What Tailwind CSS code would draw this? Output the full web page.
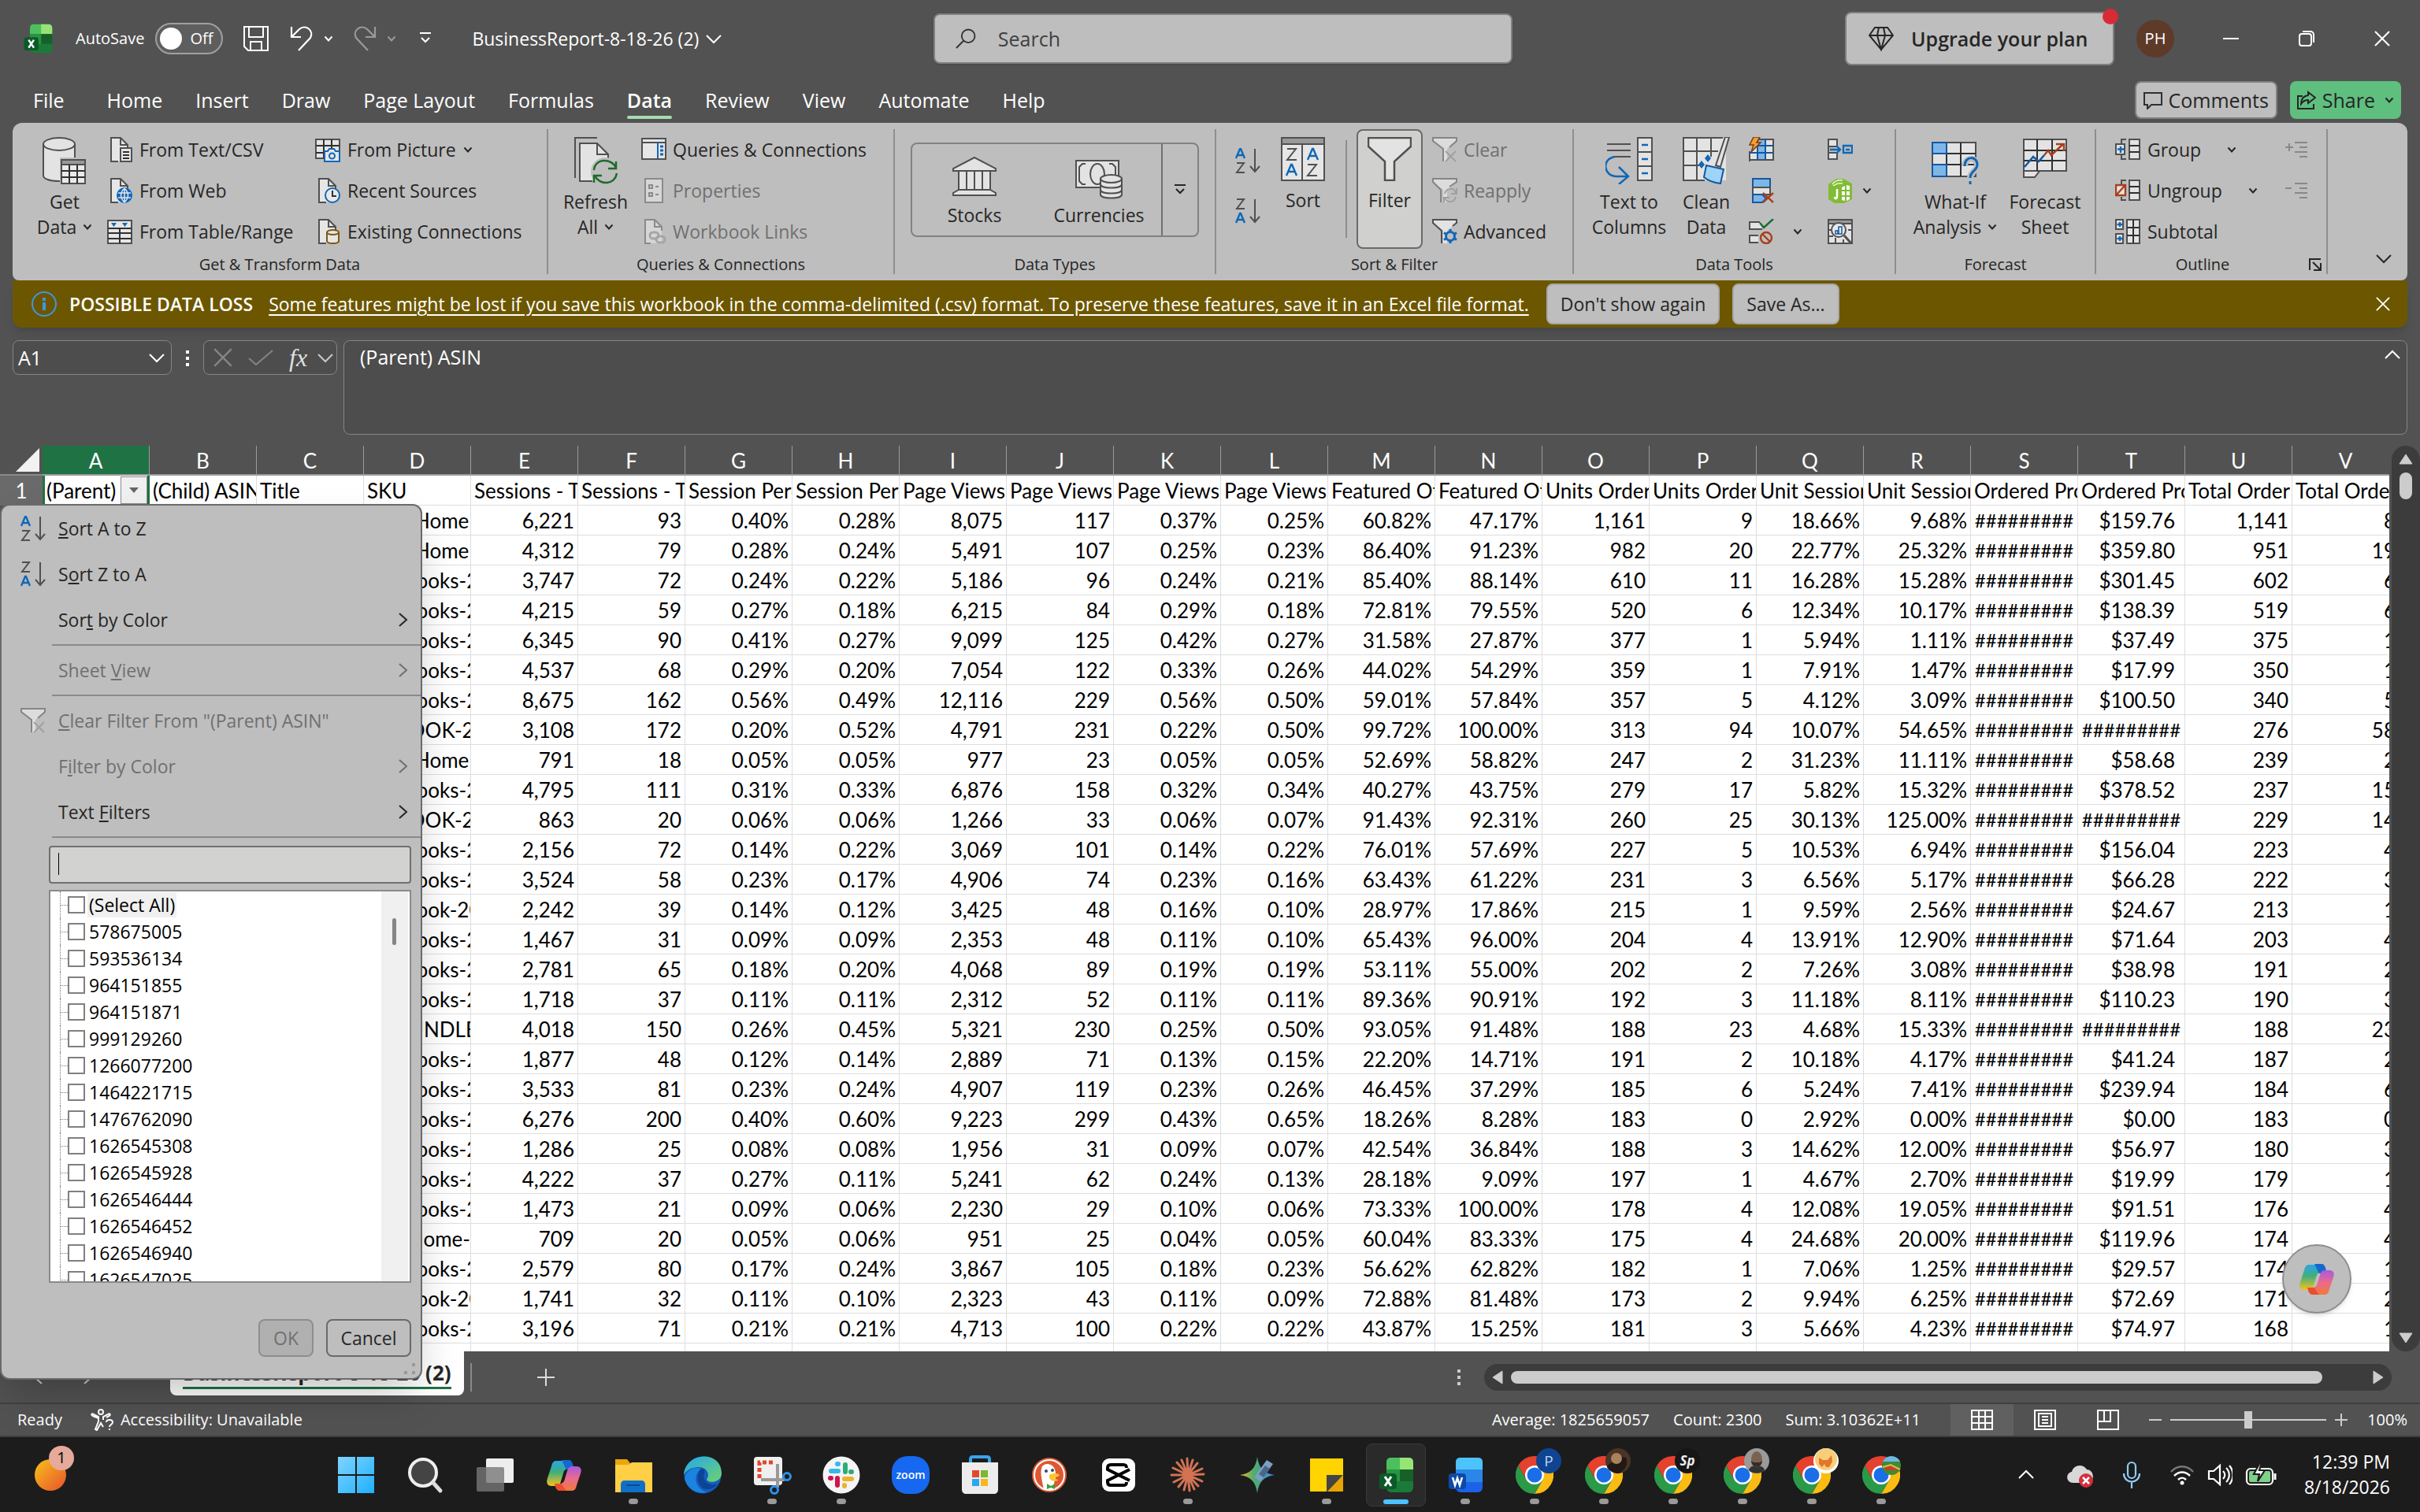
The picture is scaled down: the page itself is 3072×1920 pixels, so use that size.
<!DOCTYPE html>
<html lang="en">
  <head>
    <meta charset="UTF-8" />
    <meta name="viewport" content="width=device-width, initial-scale=1.0" />
    <title>BusinessReport-8-18-26 (2) - Excel</title>
    <script src="https://cdn.jsdelivr.net/npm/@tailwindcss/browser@4"></script>
  </head>
  <body class="flex h-screen flex-col overflow-hidden bg-[#525252] font-['Open_Sans','Noto_Sans',sans-serif] text-[23px] leading-8 text-[#262626]">
    <!-- shared icons -->
    <svg class="absolute size-0" aria-hidden="true">
      <defs>
        <linearGradient id="gBlue" x1="0" y1="0" x2="1" y2="1"><stop offset="0" stop-color="#7fd4ff" /><stop offset="1" stop-color="#1fb0ff" /></linearGradient>
        <linearGradient id="gCopL" x1="0" y1="0" x2="0" y2="1"><stop offset="0" stop-color="#2aa5e8" /><stop offset=".45" stop-color="#3fae7c" /><stop offset="1" stop-color="#f6c21c" /></linearGradient>
        <linearGradient id="gCopR" x1="0" y1="0" x2="0" y2="1"><stop offset="0" stop-color="#a65be0" /><stop offset=".5" stop-color="#ec6a8c" /><stop offset="1" stop-color="#f07a3a" /></linearGradient>
        <linearGradient id="gEdge" x1="0" y1="0" x2="1" y2="1"><stop offset="0" stop-color="#22a7ee" /><stop offset="1" stop-color="#6fd36b" /></linearGradient>
        <linearGradient id="gGem" x1="0" y1="0" x2="1" y2="0"><stop offset="0" stop-color="#f2b32a" /><stop offset=".4" stop-color="#4fae6a" /><stop offset="1" stop-color="#3f86f0" /></linearGradient>
        <linearGradient id="gSun" x1="0" y1="0" x2="1" y2="1"><stop offset="0" stop-color="#f8c21a" /><stop offset="1" stop-color="#e8502c" /></linearGradient>
      </defs>
      <symbol id="chev" viewBox="0 0 12 12"><path d="M1.5 3.5 6 8.5l4.500-5" fill="none" stroke="currentColor" stroke-width="2" /></symbol>
      <symbol id="chevThin" viewBox="0 0 20 20"><path d="m1 6 9 9 9-9" fill="none" stroke="currentColor" stroke-width="2" /></symbol>
      <symbol id="chevRight" viewBox="0 0 20 20"><path d="m5 2 9 8-9 8" fill="none" stroke="currentColor" stroke-width="2" /></symbol>
      <symbol id="close" viewBox="0 0 20 20"><path d="m1 1 18 18M19 1 1 19" fill="none" stroke="currentColor" stroke-width="2" /></symbol>
      <symbol id="page" viewBox="0 0 32 32"><path d="M5 1h12l9 9v21H5z" fill="#e6e6e6" stroke="none" /><path d="M14 31H5V1h12l9 9v4M17 1v9h9" fill="none" stroke="#505050" stroke-width="2" /></symbol>
      <symbol id="sortAZ" viewBox="0 0 32 32">
        <path d="m1 13 5-12h1l5 12M3 9h7" fill="none" stroke="#1067b8" stroke-width="2.400" />
        <path d="M2 19h9L2 31h10M25 1v29m-6-7 6 7 6-7" fill="none" stroke="#505050" stroke-width="2" />
      </symbol>
      <symbol id="sortZA" viewBox="0 0 32 32">
        <path d="M2 1h9L2 13h10M25 1v29m-6-7 6 7 6-7" fill="none" stroke="#505050" stroke-width="2" />
        <path d="m1 31 5-12h1l5 12M3 27h7" fill="none" stroke="#1067b8" stroke-width="2.400" />
      </symbol>
      <symbol id="copilot" viewBox="0 0 48 48">
        <path d="M14 6h14c4 0 6 2 7 6l1 4h-6c-4 0-6 2-7 6l-3 10c-1 4-3 6-7 6H8c-5 0-7-4-5-10l5-15c1-5 3-7 6-7z" fill="url(#gCopL)" />
        <path d="M21 5h9c3 0 4 2 5 5l2 7h-7c-3 0-4 0-6-6z" fill="#1468cf" />
        <path d="M34 44H20c-4 0-6-2-7-6l-1-3h6c4 0 6-2 7-6l3-10c1-4 3-6 7-6h5c5 0 7 4 5 9l-5 15c-1 5-3 7-6 7z" fill="url(#gCopR)" />
        <path d="M27 44h-8c-3 0-5-2-6-6l-1-3h6c3 0 4 1 5 4z" fill="#ea4d2f" />
      </symbol>
      <symbol id="chrome" viewBox="0 0 48 48">
        <path d="M24 12h20.800A24 24 0 0 1 24 48l10.400-18z" fill="#fabb12" />
        <path d="M34.400 30 24 48A24 24 0 0 1 3.200 12l10.400 18z" fill="#2a9a48" />
        <path d="M13.600 30 3.200 12A24 24 0 0 1 44.800 12H24z" fill="#e5412f" />
        <circle cx="24" cy="24" r="12" fill="#fff" /><circle cx="24" cy="24" r="9.500" fill="#1a6fe8" />
      </symbol>
      <symbol id="excel" viewBox="0 0 48 48">
        <rect x="12" y="2" width="34" height="44" rx="6" fill="#1c7a38" />
        <path d="M18 2h12v15H12V8c0-4 2-6 6-6z" fill="#4cc05e" /><path d="M29 2h11c4 0 6 2 6 6v9H29z" fill="#97e476" />
        <path d="M29 17h17v15H29z" fill="#17602a" /><path d="M12 17h17v15H12z" fill="#27963f" />
        <rect x="3" y="22" width="22" height="20" rx="4" fill="#0c5a2a" />
        <path d="m10 26 8 12m0-12-8 12" stroke="#fff" stroke-width="3" />
      </symbol>
      <symbol id="word" viewBox="0 0 48 48">
        <rect x="12" y="2" width="34" height="44" rx="6" fill="#1a62e8" />
        <path d="M18 2h22c4 0 6 2 6 6v10H12V8c0-4 2-6 6-6z" fill="#4cc4fb" /><path d="M12 17h34v16H12z" fill="#2c86e8" />
        <rect x="3" y="22" width="22" height="20" rx="4" fill="#0c4aa8" />
        <path d="m8 27 3 10 3-9 3 9 3-10" fill="none" stroke="#fff" stroke-width="2.500" />
      </symbol>
    </svg>

    <!-- title bar -->
    <header class="flex h-[98px] shrink-0 items-center pr-[38px] pl-7 text-white">
      <svg class="size-10" viewBox="0 0 48 48"><use href="#excel" /></svg>
      <label for="autosave" class="ml-7 text-xl">AutoSave</label>
      <div class="relative ml-[14px] flex h-10 w-[86px] items-center">
        <input id="autosave" type="checkbox" role="switch" class="peer size-full appearance-none rounded-full border-2 border-[#a0a0a0] bg-[#5e5e5e]" />
        <span class="pointer-events-none absolute left-[6px] size-7 rounded-full bg-white"></span>
        <span class="pointer-events-none absolute left-[44px] text-xl">Off</span>
      </div>
      <button aria-label="Save" class="ml-[26px]"><svg class="size-8" viewBox="0 0 32 32" fill="none" stroke="#fff" stroke-width="2"><path d="M1 1h30v30H6l-5-5zM7 1v13h18V1M9 31V20h14v11" /></svg></button>
      <button aria-label="Undo" class="ml-[26px]"><svg class="size-8" viewBox="0 0 32 32" fill="none" stroke="#fff" stroke-width="2.200"><path d="M3 1v13h12M3 14 13 4c8-7 19 2 14 11L12 31" /></svg></button>
      <svg class="ml-3 size-3"><use href="#chev" /></svg>
      <button aria-label="Redo" class="ml-6 text-[#9a9a9a]"><svg class="size-8" viewBox="0 0 32 32" fill="none" stroke="currentColor" stroke-width="2.200"><path d="M29 1v13H17M29 14 19 4C11-3 0 6 5 15l15 16" /></svg></button>
      <svg class="ml-3 size-3 text-[#9a9a9a]"><use href="#chev" /></svg>
      <button aria-label="Customize Quick Access Toolbar" class="ml-[30px]"><svg class="h-4 w-[14px]" viewBox="0 0 14 16" fill="none" stroke="#fff" stroke-width="2"><path d="M0 1h14M2 7l5 5 5-5" /></svg></button>
      <button class="ml-[52px] flex items-center gap-[9px]">BusinessReport-8-18-26 (2)<svg class="size-5"><use href="#chevThin" /></svg></button>
      <div class="absolute left-[1185px] flex h-16 w-[735px] items-center gap-7 rounded-lg border-2 border-[#808080] bg-[#bebebe] pl-[26px] text-[#3c3c3c] shadow">
        <svg class="size-7" viewBox="0 0 28 28" fill="none" stroke="#303030" stroke-width="2"><circle cx="17.500" cy="10.500" r="9" /><path d="M11 17 1 27" /></svg>
        <input aria-label="Search" placeholder="Search" class="w-full bg-transparent text-[25px] outline-none placeholder:text-[#404040]" />
      </div>
      <button class="relative ml-auto flex h-[68px] w-[342px] items-center gap-[22px] rounded-lg border-2 border-[#808080] bg-[#bebebe] pl-7 text-[25px] font-semibold text-[#262626]">
        <svg class="size-8" viewBox="0 0 32 32" fill="none" stroke="#262626" stroke-width="2"><path d="M8 2h16l7 10-15 18L1 12zM1 12h30M11 12l5 18 5-18-2-10M11 12l2-10" /></svg>
        Upgrade your plan
        <span class="absolute -top-[6px] -right-[7px] size-5 rounded-full bg-[#d92b35]"></span>
      </button>
      <button class="ml-7 size-12 rounded-full bg-[#5e3a28] text-xl">PH</button>
      <button aria-label="Minimize" class="ml-[62px]"><svg class="size-5" viewBox="0 0 20 20" stroke="#fff" stroke-width="2"><path d="M0 10h20" /></svg></button>
      <button aria-label="Restore" class="ml-[76px]"><svg class="size-5" viewBox="0 0 20 20" fill="none" stroke="#fff" stroke-width="2"><rect x="1" y="4" width="15" height="15" rx="3" /><path d="M5 1h10a4 4 0 0 1 4 4v10" /></svg></button>
      <button aria-label="Close" class="ml-[76px]"><svg class="size-5"><use href="#close" /></svg></button>
    </header>

    <!-- ribbon tabs -->
    <nav class="flex h-[58px] shrink-0 items-center gap-[42px] pr-6 pl-[42px] text-[25px] text-white">
      <a href="#" class="mr-3">File</a>
      <a href="#">Home</a>
      <a href="#">Insert</a>
      <a href="#">Draw</a>
      <a href="#">Page Layout</a>
      <a href="#">Formulas</a>
      <a href="#" class="relative font-semibold">Data<span class="absolute inset-x-0 -bottom-2 h-1 rounded bg-[#a5dcb0]"></span></a>
      <a href="#">Review</a>
      <a href="#">View</a>
      <a href="#">Automate</a>
      <a href="#">Help</a>
      <div class="ml-auto flex gap-4 text-[#262626]">
        <button class="flex h-12 items-center gap-2 rounded-lg border-2 border-[#808080] bg-[#bebebe] px-[9px]">
          <svg class="size-6" viewBox="0 0 24 24" fill="none" stroke="#303030" stroke-width="2"><path d="M1 3h22v15H10l-5 5v-5H1z" /></svg>Comments
        </button>
        <button class="flex h-12 items-center gap-2 rounded-lg bg-[#5fbf7f] px-[9px]">
          <svg class="size-6" viewBox="0 0 24 24" fill="none" stroke="#262626" stroke-width="2"><path d="M7 7H1v16h20v-6M14 2l9 7-9 7v-4c-5 0-7 2-9 5 0-6 3-10 9-11z" /></svg>Share<svg class="ml-1 size-3"><use href="#chev" /></svg>
        </button>
      </div>
    </nav>

    <!-- ribbon -->
    <section class="mx-4 flex h-[200px] shrink-0 rounded-t-xl rounded-b-lg bg-[#bebebe] py-2 text-center">
      <div class="flex w-[680px] flex-col border-r-2 border-[#8e8e8e]">
        <div class="flex flex-1 pl-6">
          <button class="flex w-[84px] flex-col items-center pt-[10px]">
            <svg class="mb-[6px] h-[60px] w-14" viewBox="0 0 56 60" stroke="#505050" stroke-width="2"><path d="M1 9v40c0 4 8 7 20 7s20-3 20-7V9" fill="#e3e3e3" /><ellipse cx="21" cy="9" rx="20" ry="8" fill="#e3e3e3" /><path d="M22 26h34v34H22z" fill="#bebebe" stroke="none" /><path d="M24 29h30v30H24z" fill="#e9e9e9" /><path d="M24 29h30v6H24z" fill="#999" /><path d="M34 35v24m10-24v24M24 43h30m-30 8h30" stroke="#303030" /></svg>
            Get<span class="flex items-center gap-2">Data<svg class="size-3"><use href="#chev" /></svg></span>
          </button>
          <div class="ml-3 w-[264px]">
            <button class="flex h-[52px] items-center gap-[9px]"><svg class="size-8" viewBox="0 0 32 32"><use href="#page" /><path d="M17 14h14v17H17z" fill="#e6e6e6" stroke="#505050" stroke-width="2" /><path d="M20 19h8m-8 4h8m-8 4h8" stroke="#303030" stroke-width="2" /></svg>From Text/CSV</button>
            <button class="flex h-[52px] items-center gap-[9px]"><svg class="size-8" viewBox="0 0 32 32"><use href="#page" /><circle cx="22" cy="22" r="10" fill="#1067b8" /><path d="M14 19h16m-16 6h16M22 13v18M22 13c-6 6-6 12 0 18 6-6 6-12 0-18" fill="none" stroke="#e6e6e6" stroke-width="1.500" /></svg>From Web</button>
            <button class="flex h-[52px] items-center gap-[9px]"><svg class="size-8" viewBox="0 0 32 32" stroke="#505050" stroke-width="2"><path d="M1 2h30v29H1z" fill="#e6e6e6" /><path d="M1 12h30M1 18h30M1 25h30M16 12v19" stroke="#303030" /><path d="M5 5h7l-3.500 5zM19 5h7l-3.500 5z" fill="#1067b8" stroke="none" /></svg>From Table/Range</button>
          </div>
          <div>
            <button class="flex h-[52px] items-center gap-[9px]"><svg class="size-8" viewBox="0 0 32 32" stroke="#303030" stroke-width="2" fill="none"><path d="M1 3h30v24H1z" fill="#e6e6e6" stroke="#505050" /><path d="M11 3v24M21 3v12M1 11h30M1 20h12" /><path d="M12 18h4l2-3h6l2 3h5v13H12z" fill="#e6e6e6" stroke="#1067b8" /><circle cx="21.500" cy="24" r="3.500" stroke="#1067b8" /></svg>From Picture<svg class="size-3"><use href="#chev" /></svg></button>
            <button class="flex h-[52px] items-center gap-[9px]"><svg class="size-8" viewBox="0 0 32 32"><use href="#page" /><circle cx="22" cy="22" r="9" fill="#e9e9e9" stroke="#1067b8" stroke-width="2" /><path d="M22 16v7h5" fill="none" stroke="#303030" stroke-width="2" /></svg>Recent Sources</button>
            <button class="flex h-[52px] items-center gap-[9px]"><svg class="size-8" viewBox="0 0 32 32"><use href="#page" /><path d="M15 17v11c0 4 15 4 15 0V17" fill="#e6e6e6" stroke="#7a5a10" stroke-width="2" /><ellipse cx="22.500" cy="17" rx="7.500" ry="3" fill="#e6e6e6" stroke="#7a5a10" stroke-width="2" /></svg>Existing Connections</button>
          </div>
        </div>
        <h2 class="text-xl leading-6">Get &amp; Transform Data</h2>
      </div>

      <div class="flex w-[440px] flex-col border-r-2 border-[#8e8e8e]">
        <div class="flex flex-1 pl-[18px]">
          <button class="flex w-[84px] flex-col items-center pt-[10px]">
            <svg class="mb-[6px] h-[60px] w-14" viewBox="0 0 56 60" fill="none" stroke="#505050" stroke-width="2"><path d="M2 52V1h28" /><path d="M8 56V8h22l14 14v34z" fill="#e3e3e3" stroke="none" /><path d="M24 56H8V8h22l14 14v6M30 8v14h14" /><circle cx="40" cy="44" r="18" fill="#bebebe" stroke="none" /><path d="M26 42c1-15 22-16 28-3M54 31v9h-10M55 46c-2 15-22 16-28 3M26 58v-9h10" stroke="#1d6b2b" stroke-width="2.500" /></svg>
            Refresh<span class="flex items-center gap-2">All<svg class="size-3"><use href="#chev" /></svg></span>
          </button>
          <div class="ml-4">
            <button class="flex h-[52px] items-center gap-2"><svg class="size-8" viewBox="0 0 32 32" stroke="#505050" stroke-width="2"><path d="M1 2h30v26H1z" fill="#e6e6e6" /><path d="M1 7h30M21 7v21" /><path d="M21 7v20" stroke="#1067b8" /><path d="M24 12h4m-4 5h4m-4 5h4" stroke="#1067b8" stroke-width="3" /></svg>Queries &amp; Connections</button>
            <button disabled class="flex h-[52px] items-center gap-2 text-[#707070]"><svg class="size-8" viewBox="0 0 32 32" fill="none" stroke="#8a8a8a" stroke-width="2"><path d="M5 1h22v30H5z" fill="#d6d6d6" /><path d="M10 9h4v4h-4zM10 19h4v4h-4zM18 11h4m-4 10h4" /></svg>Properties</button>
            <button disabled class="flex h-[52px] items-center gap-2 text-[#707070]"><svg class="size-8" viewBox="0 0 32 32" fill="none" stroke="#8a8a8a" stroke-width="2"><path d="M5 1h12l9 9v21H5z" fill="#d6d6d6" stroke="none" /><path d="M12 31H5V1h12l9 9v5M17 1v9h9" /><rect x="11" y="17" width="11" height="8" rx="4" stroke="#a6a6a6" stroke-width="3" /><rect x="19" y="22" width="11" height="8" rx="4" stroke="#a6a6a6" stroke-width="3" /></svg>Workbook Links</button>
          </div>
        </div>
        <h2 class="text-xl leading-6">Queries &amp; Connections</h2>
      </div>

      <div class="flex w-[408px] flex-col border-r-2 border-[#8e8e8e]">
        <div class="flex-1 px-5 pt-[17px]">
          <div class="flex h-[120px] rounded-lg border-2 border-[#828282]">
            <button class="flex w-[158px] flex-col items-center pt-4">
              <svg class="mb-2 h-[50px] w-14" viewBox="0 0 56 50" fill="#e3e3e3" stroke="#505050" stroke-width="2"><path d="M28 1 1 15v3h54v-3zM8 18h40v24H8zM8 42h40l7 4v3H1v-3z" /><path d="M18 18v24m10-24v24m10-24v24" /></svg>Stocks
            </button>
            <button class="flex w-[158px] flex-col items-center pt-5">
              <svg class="mb-1 h-[50px] w-[60px]" viewBox="0 0 60 50" fill="#e3e3e3" stroke="#505050" stroke-width="2"><path d="M1 1h54v34H1z" /><path d="M13 5H9L5 9v18l4 4h4M43 5h4l4 4v10" fill="none" /><ellipse cx="28" cy="18" rx="9" ry="13" /><path d="M32 24v20c0 6 27 6 27 0V24z" /><ellipse cx="45.500" cy="24" rx="13.500" ry="5" /><path d="M32 31c0 6 27 6 27 0M32 38c0 6 27 6 27 0" fill="none" /></svg>Currencies
            </button>
            <button aria-label="More data types" class="flex flex-1 items-center justify-center border-l-2 border-[#707070]"><svg class="h-[14px] w-[14px]" viewBox="0 0 14 14" fill="none" stroke="#262626" stroke-width="2"><path d="M0 1h14M2 6l5 5 5-5" /></svg></button>
          </div>
        </div>
        <h2 class="text-xl leading-6">Data Types</h2>
      </div>

      <div class="flex w-[454px] flex-col border-r-2 border-[#8e8e8e]">
        <div class="flex flex-1 pl-6">
          <div class="flex flex-col gap-8 pt-6">
            <button aria-label="Sort A to Z"><svg class="size-8"><use href="#sortAZ" /></svg></button>
            <button aria-label="Sort Z to A"><svg class="size-8"><use href="#sortZA" /></svg></button>
          </div>
          <button class="ml-3 flex w-[84px] flex-col items-center pt-[10px]">
            <svg class="mb-2 size-14" viewBox="0 0 56 56" fill="none" stroke="#505050" stroke-width="2"><path d="M1 1h54v54H1z" fill="#e6e6e6" /><path d="M1 1h54v8H1z" fill="#999" /><path d="M27 9v46" /><path d="M8 15h11L8 29h12M34 35h11L34 49h12" /><path d="m34 29 6-14h1l6 14m-11-5h9M7 49l6-14h1l6 14M9 44h9" stroke="#1067b8" stroke-width="2.400" /></svg>Sort
          </button>
          <div class="mt-[14px] ml-3 h-[124px] w-[2px] bg-[#8e8e8e]"></div>
          <button class="ml-3 flex h-[152px] w-[84px] flex-col items-center rounded-lg border-2 border-[#6a6a6a] bg-[#d0d0ce] pt-2">
            <svg class="mb-2 size-14 text-[#505050]" viewBox="0 0 56 56"><path d="M1 1h54v11L34 31v24H22V31L1 12z" fill="#e3e3e3" stroke="currentColor" stroke-width="2.500" /></svg>Filter
          </button>
          <div class="ml-3">
            <button disabled class="flex h-[52px] items-center gap-2 text-[#707070]"><svg class="size-8" viewBox="0 0 32 32"><path d="M1 1h30v4L19 15v16h-5V15L1 5z" fill="#dcdcdc" /><path d="M14 31V15L1 5V1h30v4l-9 8" fill="none" stroke="#858585" stroke-width="2" /><path d="m17 18 13 13m0-13L17 31" stroke="#a0a0a0" stroke-width="2" /></svg>Clear</button>
            <button disabled class="flex h-[52px] items-center gap-2 text-[#707070]"><svg class="size-8" viewBox="0 0 32 32" fill="none" stroke-width="2"><path d="M1 1h30v4L19 15v16h-5V15L1 5z" fill="#dcdcdc" /><path d="M11 31V15L1 5V1h30v4l-9 6" stroke="#858585" /><path d="M16 20c2-8 12-8 14-1m1-6v7h-7M30 24c-2 8-12 8-14 1m-1 6v-6h7" stroke="#a0a0a0" /></svg>Reapply</button>
            <button class="flex h-[52px] items-center gap-2"><svg class="size-8" viewBox="0 0 32 32" fill="none" stroke-width="2"><path d="M1 1h30v4L19 15v16h-5V15L1 5z" fill="#e3e3e3" /><path d="M12 31V15L1 5V1h30v4l-5 4" stroke="#505050" /><circle cx="23" cy="22" r="5.500" stroke="#1067b8" stroke-width="3" /><path d="M23 13v4m0 10v4M15 17.500l3 2m10 5 3 2M15 26.500l3-2m10-5 3-2" stroke="#1067b8" stroke-width="3" /></svg>Advanced</button>
          </div>
        </div>
        <h2 class="text-xl leading-6">Sort &amp; Filter</h2>
      </div>

      <div class="flex w-[409px] flex-col border-r-2 border-[#8e8e8e]">
        <div class="flex flex-1 pl-5">
          <button class="flex w-[100px] flex-col items-center pt-[10px]">
            <svg class="mb-[6px] size-[60px]" viewBox="0 0 60 60" fill="none" stroke="#505050" stroke-width="2"><path d="M2 9h30M2 17h30M12 25h20" /><path d="M41 1h18v54H41z" fill="#e3e3e3" /><path d="M41 19h18M41 37h18" /><path d="M46 10h8m-8 18h8m-8 18h8" stroke="#1067b8" stroke-width="2.500" /><path d="M12 25C-6 28-2 50 14 50h14M17 38l12 12-12 10" stroke="#1067b8" stroke-width="2.500" /></svg>
            Text to<span>Columns</span>
          </button>
          <button class="ml-[6px] flex w-[84px] flex-col items-center pt-[10px]">
            <svg class="mb-[6px] size-[60px]" viewBox="0 0 60 60" fill="none" stroke="#505050" stroke-width="2"><path d="M1 1h54v54H1z" fill="#e3e3e3" stroke="none" /><path d="M28 55H1V1h50M18 1v54M36 1v24M1 18h44M1 36h20" /><path d="M54 0h5L48 38l-6-2z" fill="#e3e3e3" /><path d="m30 36 22 5-4 18c-10-1-16-4-21-8z" fill="#9fd3f8" stroke="#1458a0" /><path d="m32 22 4 5-4 5-4-5zM24 30l4 5-4 5-4-5z" fill="#1067b8" stroke="none" /></svg>
            Clean<span>Data</span>
          </button>
          <div class="ml-3 w-[100px]">
            <button aria-label="Flash Fill" class="flex h-[52px] items-center"><svg class="size-8" viewBox="0 0 32 32" fill="none" stroke="#505050" stroke-width="2"><path d="M1 31V18M10 3h21v26H1v-9" fill="#e3e3e3" /><path d="M11 3v26h10V3z" fill="#7eb6e8" /><path d="M1 20h30M11 11h20M11 11v18M21 3v26" stroke="#1458a0" /><path d="M6 0h8l-4 7h5L3 19l3-9H1z" fill="#f0a030" stroke="#7a3a14" stroke-width="1.500" /></svg></button>
            <button aria-label="Remove Duplicates" class="flex h-[52px] items-center"><svg class="size-8" viewBox="0 0 32 32" fill="none" stroke="#1458a0" stroke-width="2"><path d="M5 1h22v11H5z" fill="#7eb6e8" /><path d="M5 12h22v9H5z" fill="#e3e3e3" stroke="#505050" /><path d="M5 21h12l5 5-5 5H5z" fill="#7eb6e8" /><path d="m18 19 13 12m0-12L18 31" stroke="#a8401c" stroke-width="2.400" /></svg></button>
            <button aria-label="Data Validation" class="flex h-[52px] items-center gap-6"><svg class="size-8" viewBox="0 0 32 32" fill="none" stroke="#505050" stroke-width="2"><path d="M14 4H1v9h16M12 21H1v9h11" fill="#e3e3e3" /><path d="m14 5 5 6L31 0" stroke="#1d6b2b" stroke-width="2.400" /><circle cx="22" cy="24" r="7" stroke="#a8401c" stroke-width="2.400" /><path d="m17 19 10 10" stroke="#a8401c" stroke-width="2.400" /></svg><svg class="size-3"><use href="#chev" /></svg></button>
          </div>
          <div>
            <button aria-label="Consolidate" class="flex h-[52px] items-center"><svg class="size-8" viewBox="0 0 32 32" fill="none" stroke="#505050" stroke-width="2"><path d="M1 3h11v9H1zM1 20h11v8H1z" fill="#e3e3e3" /><path d="M1 12v8" /><path d="M3 16h13m-5-5 5 5-5 5M20 11h11v9H20zM23 16h5" stroke="#1067b8" stroke-width="2.400" /></svg></button>
            <button aria-label="Relationships" class="flex h-[52px] items-center gap-3"><svg class="size-8" viewBox="0 0 32 32"><path d="M11 1h9l11 6v20l-10 5H9L1 27V8z" fill="#82bc34" /><path d="M6 8c3-4 7-6 13-5M7 10c4-3 7-4 12-3" fill="none" stroke="#e8f5d8" stroke-width="1.500" /><path d="M18 12l4-2v5h-4zm6-3 4 1v5h-4zM18 17h4v5h-4zm6 0h4v5h-4zM18 24h4v5l-4-1zm6 0h4v3l-4 2z" fill="#fff" /><path d="M12 14v9c0 4-3 4-3 1" fill="none" stroke="#fff" stroke-width="2.500" /></svg><svg class="size-3"><use href="#chev" /></svg></button>
            <button aria-label="Manage Data Model" class="flex h-[52px] items-center"><svg class="size-8" viewBox="0 0 32 32" fill="none" stroke="#505050" stroke-width="2"><path d="M1 1h30v30H1z" fill="#e3e3e3" /><path d="M1 1h30v5H1z" fill="#999" /><path d="M1 14h5M1 22h6M10 24v7M20 26v5M26 14h5" /><circle cx="14" cy="14" r="9" fill="#e9e9e9" /><path d="m21 21 9 10" stroke-width="3" /><path d="M10 15h3v4h-3zM14 10h4v9h-4z" stroke="#1458a0" stroke-width="1.500" /></svg></button>
          </div>
        </div>
        <h2 class="text-xl leading-6">Data Tools</h2>
      </div>

      <div class="flex w-[254px] flex-col border-r-2 border-[#8e8e8e]">
        <div class="flex flex-1 pl-5">
          <button class="flex w-[110px] flex-col items-center pt-[10px]">
            <svg class="mb-[6px] size-[60px]" viewBox="0 0 60 60" fill="none" stroke="#505050" stroke-width="2"><path d="M1 7h55v43H1z" fill="#e3e3e3" /><path d="M1 7h18v14H1zM1 35h18v15H1z" fill="#7eb6e8" /><path d="M19 7v43M37 7v43M1 21h55M1 35h55" stroke="#303030" /><path d="M1 7h18v14H1zM1 35h18v15H1z" stroke="#1458a0" /><path d="M42 37c0-12 16-12 16-1 0 8-9 7-9 16" stroke="#bebebe" stroke-width="8" /><path d="M42 37c0-14 16-13 16-2 0 8-9 8-9 17M49 56v4" stroke="#1067b8" stroke-width="3" /></svg>
            What-If<span class="flex items-center gap-2">Analysis<svg class="size-3"><use href="#chev" /></svg></span>
          </button>
          <button class="ml-1 flex w-[110px] flex-col items-center pt-[10px]">
            <svg class="mb-[6px] h-[60px] w-14" viewBox="0 0 56 60" fill="none" stroke="#505050" stroke-width="2"><path d="M1 44v7h14l7-9" fill="#e3e3e3" /><path d="M1 3h54v40H1z" fill="#e3e3e3" /><path d="M18 3v40M37 3v40M1 17h54M1 30h54" stroke="#303030" /><path d="m2 38 11-13 7 6 7-8" stroke="#1458a0" stroke-width="2.500" /><path d="m27 23 5-6 4 6L51 9m-9 0h10v9" stroke="#a8401c" stroke-width="2.500" /></svg>
            Forecast<span>Sheet</span>
          </button>
        </div>
        <h2 class="text-xl leading-6">Forecast</h2>
      </div>

      <div class="flex w-[294px] flex-col border-r-2 border-[#8e8e8e]">
        <div class="flex flex-1 pl-6">
          <div class="w-[216px]">
            <button class="flex h-[52px] items-center gap-[9px]"><svg class="size-8" viewBox="0 0 32 32" fill="none" stroke="#505050" stroke-width="2"><path d="M8 9V3h6M8 23v5h6" /><path d="M18 3h13v25H18z" fill="#e3e3e3" /><path d="M18 11h13M18 19h13" stroke="#303030" /><path d="M1 9h11v13H1z" fill="#e3e3e3" /><path d="M3 15.500h8M7 12v8" stroke="#1067b8" stroke-width="2.400" /></svg>Group<svg class="ml-6 size-3"><use href="#chev" /></svg></button>
            <button class="flex h-[52px] items-center gap-[9px]"><svg class="size-8" viewBox="0 0 32 32" fill="none" stroke="#505050" stroke-width="2"><path d="M8 8V3h6M8 24v4h6" /><path d="M18 3h13v25H18z" fill="#e3e3e3" /><path d="M18 11h13M18 19h13" stroke="#303030" /><path d="M1 9h12v13H1zM2 21 12 10" fill="#e3e3e3" stroke="#a8401c" stroke-width="2.400" /></svg>Ungroup<svg class="ml-6 size-3"><use href="#chev" /></svg></button>
            <button class="flex h-[52px] items-center gap-[9px]"><svg class="size-8" viewBox="0 0 32 32" fill="#e3e3e3" stroke="#505050" stroke-width="2"><path d="M1 1h9v12H1zM1 19h9v12H1zM15 1h16v30H15z" /><path d="M15 11h16M15 21h16M23 1v30" stroke="#303030" /><path d="M2.500 7H9M6 4v6M2.500 25H9M6 22v6" stroke="#1067b8" stroke-width="2.400" /></svg>Subtotal</button>
          </div>
          <div>
            <button aria-label="Show Detail" disabled class="flex h-[52px] items-center"><svg class="h-5 w-7" viewBox="0 0 28 20" stroke="#888" stroke-width="2"><path d="M12 1h16M18 7h10M12 13h16M18 19h10M0 7h10M5 2v10" /></svg></button>
            <button aria-label="Hide Detail" disabled class="flex h-[52px] items-center"><svg class="h-5 w-7" viewBox="0 0 28 20" stroke="#888" stroke-width="2"><path d="M12 1h16M18 7h10M12 13h16M18 19h10M0 7h8" /></svg></button>
          </div>
        </div>
        <div class="flex items-center pr-[6px]">
          <h2 class="flex-1 text-xl leading-6">Outline</h2>
          <button aria-label="Outline settings"><svg class="size-4" viewBox="0 0 16 16" fill="none" stroke="#262626" stroke-width="2"><path d="M1 15V1h14M5 5l9 9M15 6v9H6" /></svg></button>
        </div>
      </div>
      <button aria-label="Collapse ribbon" class="ml-auto flex items-end pr-5 pb-[10px]"><svg class="size-5"><use href="#chevThin" /></svg></button>
    </section>

    <!-- message bar -->
    <section class="mx-4 flex h-[60px] shrink-0 items-center rounded-b-xl bg-[#6c5700] pr-[22px] pl-6 text-white shadow-lg">
      <svg class="size-8" viewBox="0 0 32 32" fill="none" stroke="#3f96e0" stroke-width="2"><circle cx="16" cy="16" r="15" /><path d="M16 14v10M16 8v4" stroke-width="4" /></svg>
      <strong class="ml-4 font-semibold">POSSIBLE DATA LOSS</strong>
      <a href="#" class="ml-5 underline underline-offset-4">Some features might be lost if you save this workbook in the comma-delimited (.csv) format. To preserve these features, save it in an Excel file format.</a>
      <button class="ml-[22px] h-[52px] rounded-lg border-2 border-[#a8a8a8] bg-[#bebebe] px-4 text-[#262626]">Don't show again</button>
      <button class="ml-4 h-[52px] rounded-lg border-2 border-[#a8a8a8] bg-[#bebebe] px-4 text-[#262626]">Save As...</button>
      <button aria-label="Close message" class="ml-auto"><svg class="size-[18px]" viewBox="0 0 20 20"><use href="#close" /></svg></button>
    </section>

    <!-- formula bar -->
    <section class="flex h-[150px] shrink-0 items-start px-4 pt-4 text-[25px] text-white">
      <div class="flex h-11 w-[202px] items-center rounded-lg border border-[#858585] bg-[#4d4d4d] pr-2 pl-[6px]">
        <input aria-label="Name Box" value="A1" class="w-full min-w-0 bg-transparent outline-none" />
        <svg class="size-5 shrink-0"><use href="#chevThin" /></svg>
      </div>
      <div class="mt-[13px] ml-[18px] flex flex-col gap-1"><i class="size-1 bg-white"></i><i class="size-1 bg-white"></i><i class="size-1 bg-white"></i></div>
      <div class="ml-[18px] flex h-11 w-[170px] items-center rounded-lg border border-[#858585] bg-[#4d4d4d] pr-1 pl-3">
        <button aria-label="Cancel entry" class="text-[#858585]"><svg class="size-6" viewBox="0 0 20 20"><use href="#close" /></svg></button>
        <button aria-label="Enter" class="ml-5 text-[#858585]"><svg class="h-5 w-8" viewBox="0 0 32 20" fill="none" stroke="currentColor" stroke-width="2"><path d="m1 11 9 8L31 1" /></svg></button>
        <button aria-label="Insert function" class="ml-5 font-['Liberation_Serif',serif] text-[32px] italic text-[#e0e0e0]">fx</button>
        <svg class="ml-auto size-5 text-[#c8c8c8]"><use href="#chevThin" /></svg>
      </div>
      <div class="ml-2 flex h-[120px] flex-1 rounded-lg border border-[#858585] bg-[#4d4d4d] pt-1 pr-2 pl-5">
        <textarea aria-label="Formula bar" class="w-full resize-none bg-transparent outline-none">(Parent) ASIN</textarea>
        <svg class="mt-1 size-5 shrink-0 rotate-180"><use href="#chevThin" /></svg>
      </div>
    </section>

    <main class="relative flex min-h-0 flex-1 flex-col">
      <!-- sheet -->
      <div class="flex min-h-0 flex-1">
        <div class="min-w-0 flex-1 overflow-hidden bg-white font-['Lato',sans-serif] text-[26px] leading-9 text-black">
          <table class="w-[3046px] table-fixed border-separate border-spacing-0">
            <colgroup id="cols"><col class="w-[54px]" /></colgroup>
            <thead id="head"></thead>
            <tbody id="rows"></tbody>
          </table>
        </div>
        <div class="ml-[3px] flex w-9 flex-col items-center rounded-full bg-[#3c3c3c] py-[10px]">
          <svg class="h-[14px] w-[18px]" viewBox="0 0 18 14"><path d="m9 1 8 12H1z" fill="#ccc" stroke="#ccc" /></svg>
          <div class="mt-[10px] h-[34px] w-4 rounded-full bg-[#ccc]"></div>
          <svg class="mt-auto h-[14px] w-[18px]" viewBox="0 0 18 14"><path d="M1 1h16L9 13z" fill="#ccc" stroke="#ccc" /></svg>
        </div>
      </div>

      <!-- sheet tabs -->
      <div class="flex h-[65px] shrink-0 items-center pr-9 pl-[38px] text-[#c8c8c8]">
        <svg class="size-5 rotate-180"><use href="#chevRight" /></svg>
        <svg class="ml-11 size-5"><use href="#chevRight" /></svg>
        <button class="mb-[9px] ml-[94px] h-14 rounded-b-lg bg-white px-4 text-[26px] font-bold text-[#262626]"><span class="block border-b-3 border-[#1f7244] leading-9">BusinessReport-8-18-26 (2)</span></button>
        <i class="ml-2 h-9 w-[2px] bg-[#8a8a8a]"></i>
        <button aria-label="New sheet" class="ml-[83px]"><svg class="size-[22px]" viewBox="0 0 22 22" stroke="#ddd" stroke-width="2"><path d="M11 0v22M0 11h22" /></svg></button>
        <div class="ml-auto flex flex-col gap-1"><i class="size-1 bg-[#ccc]"></i><i class="size-1 bg-[#ccc]"></i><i class="size-1 bg-[#ccc]"></i></div>
        <div class="ml-[30px] flex h-[34px] w-[1152px] items-center rounded-full bg-[#3c3c3c] px-[10px]">
          <svg class="h-[18px] w-[14px]" viewBox="0 0 14 18"><path d="M1 9 13 1v16z" fill="#ccc" stroke="#ccc" /></svg>
          <div class="ml-[10px] h-4 w-[1030px] rounded-full bg-[#ccc]"></div>
          <svg class="ml-auto h-[18px] w-[14px]" viewBox="0 0 14 18"><path d="M13 9 1 1v16z" fill="#ccc" stroke="#ccc" /></svg>
        </div>
      </div>

      <button aria-label="Copilot" class="absolute right-[87px] bottom-[113px] flex size-[88px] items-center justify-center rounded-full border-2 border-[#8e8e8e] bg-[#bebebe] shadow-md"><svg class="size-12"><use href="#copilot" /></svg></button>

      <!-- filter menu -->
      <div class="absolute top-[74px] left-0 flex h-[1112px] w-[536px] flex-col rounded-xl border-2 border-[#6a6a6a] bg-[#bebebe] shadow-2xl">
        <button class="flex h-[58px] shrink-0 items-center gap-4 pl-6"><svg class="size-8"><use href="#sortAZ" /></svg><span><u>S</u>ort A to Z</span></button>
        <button class="flex h-[58px] shrink-0 items-center gap-4 pl-6"><svg class="size-8"><use href="#sortZA" /></svg><span>S<u>o</u>rt Z to A</span></button>
        <button class="flex h-[58px] shrink-0 items-center justify-between pr-3 pl-[72px]"><span>Sor<u>t</u> by Color</span><svg class="size-5"><use href="#chevRight" /></svg></button>
        <hr class="my-[2px] ml-16 border-t-2 border-[#8a8a8a]" />
        <button disabled class="flex h-[58px] shrink-0 items-center justify-between pr-3 pl-[72px] text-[#707070]"><span>Sheet <u>V</u>iew</span><svg class="size-5"><use href="#chevRight" /></svg></button>
        <hr class="my-[2px] ml-16 border-t-2 border-[#8a8a8a]" />
        <button disabled class="flex h-[58px] shrink-0 items-center gap-4 pl-6 text-[#707070]"><svg class="size-8" viewBox="0 0 32 32"><path d="M1 1h30v4L19 15v16h-5V15L1 5z" fill="#dcdcdc" /><path d="M14 31V15L1 5V1h30v4l-9 8" fill="none" stroke="#858585" stroke-width="2" /><path d="m17 18 13 13m0-13L17 31" stroke="#a0a0a0" stroke-width="2" /></svg><span><u>C</u>lear Filter From "(Parent) ASIN"</span></button>
        <button disabled class="flex h-[58px] shrink-0 items-center justify-between pr-3 pl-[72px] text-[#707070]"><span>F<u>i</u>lter by Color</span><svg class="size-5"><use href="#chevRight" /></svg></button>
        <button class="flex h-[58px] shrink-0 items-center justify-between pr-3 pl-[72px]"><span>Text <u>F</u>ilters</span><svg class="size-5"><use href="#chevRight" /></svg></button>
        <hr class="mt-[2px] ml-16 border-t-2 border-[#8a8a8a]" />
        <div class="relative mt-[10px] mr-3 ml-[60px]">
          <input aria-label="Search values" class="block h-12 w-full rounded border-2 border-[#707070] bg-[#d2d2d0] px-3 outline-none" />
          <i class="absolute top-[9px] left-3 h-7 w-px bg-black"></i>
        </div>
        <div class="mt-2 mr-3 ml-[60px] flex h-[499px] shrink-0 overflow-hidden border-2 border-[#8a8a8a] bg-white text-black">
          <ul id="values" class="ml-3 flex-1"></ul>
          <div class="mr-[2px] w-[34px] bg-[#f0f0f0] pt-[34px]"><div class="ml-[14px] h-[34px] w-[5px] rounded-full bg-[#858585]"></div></div>
        </div>
        <div class="mt-[46px] mr-3 flex justify-end gap-4">
          <button disabled class="h-12 w-[70px] rounded-lg border-2 border-[#8e8e8e] bg-[#b0b0b0] text-[#707070]">OK</button>
          <button class="h-12 w-[108px] rounded-lg border-2 border-[#6a6a6a]">Cancel</button>
        </div>
        <svg class="absolute right-[6px] bottom-1 size-4" viewBox="0 0 16 16" fill="#999"><path d="M11 1h4v4h-4zM11 11h4v4h-4zM1 11h4v4H1z" /></svg>
      </div>
    </main>

    <!-- status bar -->
    <footer class="flex h-11 shrink-0 items-center border-y-2 border-[#3f3f3f] pl-[22px] text-xl text-white">
      <span>Ready</span>
      <svg class="mr-2 ml-9 h-7 w-[30px]" viewBox="0 0 30 28" fill="none" stroke="#fff" stroke-width="2"><circle cx="13" cy="4" r="3" /><path d="m2 6 8 4v6L6 26l2 1 5-9 3 5M24 6l-8 4v4M2 6c-2 2 0 3 8 6M24 6c2 2 0 3-4 5M20 17c0-4 8-4 8 0 0 3-4 3-4 6m0 2v2" /></svg>
      <span>Accessibility: Unavailable</span>
      <span class="ml-auto">Average: 1825659057</span>
      <span class="ml-[30px]">Count: 2300</span>
      <span class="ml-[30px]">Sum: 3.10362E+11</span>
      <button aria-label="Normal view" class="ml-[38px] flex h-full w-20 items-center justify-center bg-[#606060]"><svg class="size-7" viewBox="0 0 28 28" fill="none" stroke="#fff" stroke-width="2"><path d="M1 2h26v24H1zM10 2v24M18 2v24M1 10h26M1 18h26" /></svg></button>
      <button aria-label="Page layout view" class="flex w-20 justify-center"><svg class="size-7" viewBox="0 0 28 28" fill="none" stroke="#fff" stroke-width="2"><path d="M1 2h26v24H1zM6 6h16v16H6zM10 10h8m-8 4h8m-8 4h8" /></svg></button>
      <button aria-label="Page break view" class="flex w-20 justify-center"><svg class="size-7" viewBox="0 0 28 28" fill="none" stroke="#fff" stroke-width="2"><path d="M1 2h26v24H1zM1 16h16V2M9 2v14" /></svg></button>
      <button aria-label="Zoom out" class="ml-3"><svg class="size-4" viewBox="0 0 16 16" stroke="#ccc" stroke-width="2"><path d="M0 8h16" /></svg></button>
      <input aria-label="Zoom" type="range" value="50" class="mx-[11px] h-[2px] w-[198px] appearance-none bg-[#ccc] [&::-webkit-slider-thumb]:h-[22px] [&::-webkit-slider-thumb]:w-[10px] [&::-webkit-slider-thumb]:appearance-none [&::-webkit-slider-thumb]:bg-[#ccc]" />
      <button aria-label="Zoom in"><svg class="size-4" viewBox="0 0 16 16" stroke="#ccc" stroke-width="2"><path d="M0 8h16M8 0v16" /></svg></button>
      <span class="w-[92px] pr-4 text-right">100%</span>
    </footer>

    <!-- taskbar -->
    <footer class="flex h-[95px] shrink-0 items-center bg-[#1c1c1c] pr-[38px] pl-11 text-white">
      <div class="relative size-10"><svg class="size-10" viewBox="0 0 40 40"><circle cx="20" cy="20" r="20" fill="url(#gSun)" /></svg><span class="absolute -top-[17px] left-[18px] flex h-[31px] w-8 items-center justify-center rounded-full bg-[#e5aa9a] text-xl text-black">1</span></div>
      <div id="apps" class="ml-[324px] flex h-full"></div>
      <div class="ml-auto flex items-center">
        <svg class="size-5 rotate-180"><use href="#chevThin" /></svg>
        <svg class="ml-[38px] size-10" viewBox="0 0 40 40"><path d="M12 30c-10 0-10-13-2-14 2-9 14-11 19-3 8 0 11 12 4 17z" fill="#d8d8d8" /><circle cx="28" cy="27" r="9" fill="#d32f3c" /><path d="m24 23 8 8m0-8-8 8" stroke="#fff" stroke-width="2.500" /></svg>
        <svg class="ml-[34px] h-9 w-6" viewBox="0 0 24 36" fill="none" stroke="#8fcdf5" stroke-width="2.200"><rect x="7" y="2" width="10" height="20" rx="5" /><path d="M2 16c0 14 20 14 20 0M12 27v8" /></svg>
        <svg class="ml-9 size-8" viewBox="0 0 32 32" fill="none" stroke="#fff" stroke-width="2.500"><path d="M2 12c8-9 20-9 28 0" stroke="#777" /><path d="M6 17c6-6 14-6 20 0M11 22c3-3 7-3 10 0" /><circle cx="16" cy="26" r="2.500" fill="#fff" stroke="none" /></svg>
        <svg class="ml-4 size-8" viewBox="0 0 32 32" fill="none" stroke="#fff" stroke-width="2.200"><path d="M2 11h6l8-7v24l-8-7H2zM20 11c3 3 3 7 0 10M24 7c5 5 5 13 0 18M28 4c6 7 6 17 0 24" /></svg>
        <svg class="ml-4 h-8 w-10" viewBox="0 0 40 32" fill="none" stroke="#fff" stroke-width="2.200"><rect x="2" y="8" width="33" height="20" rx="5" /><rect x="5" y="11" width="27" height="14" rx="2" fill="#7fd08a" stroke="none" /><path d="M38 14v8" stroke-width="3" /><path d="M19 0 11 15h7l-2 9 9-14h-7l3-10z" fill="#fff" stroke="#1c1c1c" /></svg>
        <div class="ml-7 w-[116px] pb-[2px] text-right"><div>12:39 PM</div><div>8/18/2026</div></div>
      </div>
    </footer>

    <script>
      const letters = "ABCDEFGHIJKLMNOPQRSTUV".split("");
      const titles = ["(Parent) ASIN", "(Child) ASIN", "Title", "SKU", "Sessions - Total", "Sessions - Total", "Session Percentage", "Session Percentage", "Page Views", "Page Views", "Page Views", "Page Views", "Featured Offer", "Featured Offer", "Units Ordered", "Units Ordered", "Unit Session", "Unit Session", "Ordered Product", "Ordered Product", "Total Order Items", "Total Order Items"];
      // SKU | E..R | T (blank when too wide) | U | V
      const data = `
Home|6,221|93|0.40%|0.28%|8,075|117|0.37%|0.25%|60.82%|47.17%|1,161|9|18.66%|9.68%|$159.76|1,141|8
Home|4,312|79|0.28%|0.24%|5,491|107|0.25%|0.23%|86.40%|91.23%|982|20|22.77%|25.32%|$359.80|951|19
Books-2|3,747|72|0.24%|0.22%|5,186|96|0.24%|0.21%|85.40%|88.14%|610|11|16.28%|15.28%|$301.45|602|6
Books-2|4,215|59|0.27%|0.18%|6,215|84|0.29%|0.18%|72.81%|79.55%|520|6|12.34%|10.17%|$138.39|519|6
Books-2|6,345|90|0.41%|0.27%|9,099|125|0.42%|0.27%|31.58%|27.87%|377|1|5.94%|1.11%|$37.49|375|1
Books-2|4,537|68|0.29%|0.20%|7,054|122|0.33%|0.26%|44.02%|54.29%|359|1|7.91%|1.47%|$17.99|350|1
Books-2|8,675|162|0.56%|0.49%|12,116|229|0.56%|0.50%|59.01%|57.84%|357|5|4.12%|3.09%|$100.50|340|5
BOOK-2|3,108|172|0.20%|0.52%|4,791|231|0.22%|0.50%|99.72%|100.00%|313|94|10.07%|54.65%||276|58
Home|791|18|0.05%|0.05%|977|23|0.05%|0.05%|52.69%|58.82%|247|2|31.23%|11.11%|$58.68|239|2
Books-2|4,795|111|0.31%|0.33%|6,876|158|0.32%|0.34%|40.27%|43.75%|279|17|5.82%|15.32%|$378.52|237|15
BOOK-2|863|20|0.06%|0.06%|1,266|33|0.06%|0.07%|91.43%|92.31%|260|25|30.13%|125.00%||229|14
Books-2|2,156|72|0.14%|0.22%|3,069|101|0.14%|0.22%|76.01%|57.69%|227|5|10.53%|6.94%|$156.04|223|4
Books-2|3,524|58|0.23%|0.17%|4,906|74|0.23%|0.16%|63.43%|61.22%|231|3|6.56%|5.17%|$66.28|222|3
Book-20|2,242|39|0.14%|0.12%|3,425|48|0.16%|0.10%|28.97%|17.86%|215|1|9.59%|2.56%|$24.67|213|1
Books-2|1,467|31|0.09%|0.09%|2,353|48|0.11%|0.10%|65.43%|96.00%|204|4|13.91%|12.90%|$71.64|203|4
Books-2|2,781|65|0.18%|0.20%|4,068|89|0.19%|0.19%|53.11%|55.00%|202|2|7.26%|3.08%|$38.98|191|2
Books-2|1,718|37|0.11%|0.11%|2,312|52|0.11%|0.11%|89.36%|90.91%|192|3|11.18%|8.11%|$110.23|190|3
BUNDLE|4,018|150|0.26%|0.45%|5,321|230|0.25%|0.50%|93.05%|91.48%|188|23|4.68%|15.33%||188|23
Books-2|1,877|48|0.12%|0.14%|2,889|71|0.13%|0.15%|22.20%|14.71%|191|2|10.18%|4.17%|$41.24|187|2
Books-2|3,533|81|0.23%|0.24%|4,907|119|0.23%|0.26%|46.45%|37.29%|185|6|5.24%|7.41%|$239.94|184|6
Books-2|6,276|200|0.40%|0.60%|9,223|299|0.43%|0.65%|18.26%|8.28%|183|0|2.92%|0.00%|$0.00|183|0
Books-2|1,286|25|0.08%|0.08%|1,956|31|0.09%|0.07%|42.54%|36.84%|188|3|14.62%|12.00%|$56.97|180|3
Books-2|4,222|37|0.27%|0.11%|5,241|62|0.24%|0.13%|28.18%|9.09%|197|1|4.67%|2.70%|$19.99|179|1
Books-2|1,473|21|0.09%|0.06%|2,230|29|0.10%|0.06%|73.33%|100.00%|178|4|12.08%|19.05%|$91.51|176|4
Home-|709|20|0.05%|0.06%|951|25|0.04%|0.05%|60.04%|83.33%|175|4|24.68%|20.00%|$119.96|174|4
Books-2|2,579|80|0.17%|0.24%|3,867|105|0.18%|0.23%|56.62%|62.82%|182|1|7.06%|1.25%|$29.57|174|1
Book-20|1,741|32|0.11%|0.10%|2,323|43|0.11%|0.09%|72.88%|81.48%|173|2|9.94%|6.25%|$72.69|171|2
Books-2|3,196|71|0.21%|0.21%|4,713|100|0.22%|0.22%|43.87%|15.25%|181|3|5.66%|4.23%|$74.97|168|1`.trim().split("\n");

      document.getElementById("cols").innerHTML += letters.map(() => `<col class="w-[136px]" />`).join("");

      document.getElementById("head").innerHTML =
        `<tr class="h-[38px] bg-[#525252] text-white">
          <th class="border-b-2 border-[#8a8a8a]"><svg class="ml-5 h-[30px] w-[30px]" viewBox="0 0 30 30"><path d="M30 0v30H0z" fill="#f2f2f2" /></svg></th>` +
        letters.map((l) => `<th class="border-r border-b-2 border-[#9a9a9a] p-0 pt-[2px] leading-[34px] font-normal ${l === "A" ? "bg-[#1f7244]" : ""}">${l}</th>`).join("") +
        `</tr>`;

      const cell = "overflow-hidden whitespace-nowrap border-r border-b border-[#dedede] p-0";
      const hashes = `<td class="${cell} text-center text-2xl">#########</td>`;

      const header = titles.map((t, i) =>
        i === 0
          ? `<td class="relative overflow-hidden border-x-3 border-[#1f7244] p-0 pl-[2px] whitespace-nowrap">${t}<button aria-label="Filter column" class="absolute top-px right-0 flex h-[35px] w-[34px] items-center justify-center border border-[#8a8a8a] bg-[#f0f0f0]"><svg class="h-2 w-3" viewBox="0 0 12 8"><path d="M0 0h12L6 7z" fill="#666" /></svg></button></td>`
          : `<td class="${cell} pl-1">${t}</td>`
      ).join("");

      const skuPad = (sku) => {
        if (sku === "Home") return "pl-[64px]";
        if (sku === "Home-") return "pl-[56px]";
        return sku === sku.toUpperCase() ? "pl-[40px]" : "pl-[50px]";
      };

      const body = data.map((line, n) => {
        const [sku, ...v] = line.split("|");
        const num = (x) => `<td class="${cell} pr-1 text-right">${x}</td>`;
        return `<tr class="h-[38px]"><th class="bg-[#525252] p-0 font-normal text-white">${n + 2}</th><td class="${cell}"></td><td class="${cell}"></td><td class="${cell}"></td>
          <td class="${cell} ${skuPad(sku)}">${sku}</td>${v.slice(0, 14).map(num).join("")}${hashes}
          ${v[14] ? `<td class="${cell} pr-3 text-right">${v[14]}</td>` : hashes}${num(v[15])}${num(v[16])}</tr>`;
      }).join("");

      document.getElementById("rows").innerHTML =
        `<tr class="h-[38px]"><th class="bg-[#6a6a6a] p-0 font-normal text-white">1</th>${header}</tr>` + body +
        `<tr class="h-[38px]"><th class="bg-[#525252]"></th>${letters.map(() => `<td class="${cell}"></td>`).join("")}</tr>`;

      const values = ["(Select All)", "578675005", "593536134", "964151855", "964151871", "999129260", "1266077200", "1464221715", "1476762090", "1626545308", "1626545928", "1626546444", "1626546452", "1626546940", "1626547025"];
      document.getElementById("values").innerHTML = values.map((v, i) => `
        <li class="flex h-[34px] items-center border-l border-dotted border-[#777]">
          <i class="w-[9px] border-t border-dotted border-[#777]"></i>
          <input type="checkbox" id="v${i}" class="size-[22px] appearance-none border-2 border-[#808080] bg-white" />
          <label for="v${i}" class="ml-[3px] px-[2px] ${i === 0 ? "bg-[#f0f0f0]" : ""}">${v}</label>
        </li>`).join("");

      const chrome = (badge) => `<use href="#chrome" />${badge}`;
      // [name, drawing, running]
      const apps = [
        ["Start", `<path d="M1 1h22v22H1zM25 1h22v22H25zM1 25h22v22H1zM25 25h22v22H25z" fill="url(#gBlue)" />`, 0],
        ["Search", `<circle cx="21" cy="21" r="17" fill="#444" stroke="#eee" stroke-width="4" /><path d="m34 34 9 10" stroke="#ddd" stroke-width="5" stroke-linecap="round" />`, 0],
        ["Task View", `<rect x="13" y="3" width="35" height="31" rx="2" fill="#eee" /><rect x="1" y="14" width="35" height="31" rx="2" fill="#777" fill-opacity=".8" />`, 0],
        ["Copilot", `<use href="#copilot" />`, 0],
        ["File Explorer", `<path d="M1 4h15l4 5h27v8H1z" fill="#e9a50c" /><path d="M1 11h17l4-3h26v38H1z" fill="#ffcf45" /><path d="M8 46V36c0-3 2-5 5-5h21c3 0 5 2 5 5v10z" fill="#1070c8" /><path d="M15 37h17" stroke="#0a4a90" stroke-width="2" />`, 1],
        ["Edge", `<circle cx="24" cy="24" r="23.500" fill="#155cc0" /><path d="M0 24C2-6 48-8 48 22c0 10-14 14-19 8 5-7 0-16-10-16C8 14 2 20 0 24z" fill="url(#gEdge)" /><path d="M19 15C8 14 2 22 1 28c3 14 16 21 28 18-15-5-18-22-7-30z" fill="#1b84e0" /><path d="M22 16c-9 9-4 28 10 26 6-1 9-4 11-7-8 3-15 0-17-6-2-5 2-9 0-12z" fill="#0c4596" />`, 0],
        ["Snipping Tool", `<rect x="1" y="1" width="36" height="36" rx="4" fill="#f0f0f0" /><path d="M8 28V8h20" fill="none" stroke="#e2472c" stroke-width="5" stroke-dasharray="5 3" /><path d="M31 10v30M10 30h30" stroke="#999" stroke-width="4" /><circle cx="43" cy="26" r="4.500" fill="none" stroke="#2e90ea" stroke-width="3" /><circle cx="27" cy="43" r="4.500" fill="none" stroke="#2e90ea" stroke-width="3" />`, 1],
        ["Slack", `<circle cx="24" cy="24" r="23.500" fill="#f4f4f4" /><g stroke-width="6" stroke-linecap="round"><path d="M20 10h-1M11 19h9" stroke="#36b8ec" /><path d="M29 11v9M37 20h-1" stroke="#2eac76" /><path d="M28 29h9M28 37v1" stroke="#ecb22e" /><path d="M19 28v9M11 28h-1" stroke="#d0144c" /></g>`, 1],
        ["Zoom", `<rect width="48" height="48" rx="20" fill="#1668f0" /><text x="24" y="29" text-anchor="middle" font-family="Open Sans" font-weight="600" font-size="14" fill="#fff">zoom</text>`, 0],
        ["Store", `<path d="M12 10V4c0-2 1-3 3-3h18c2 0 3 1 3 3v6" fill="none" stroke="#3aa4ec" stroke-width="4" /><path d="M1 8h46v34c0 4-2 6-6 6H7c-4 0-6-2-6-6z" fill="#ececec" /><path d="M14 18h9v9h-9z" fill="#e2472c" /><path d="M25 18h9v9h-9z" fill="#7cb82f" /><path d="M14 29h9v9h-9z" fill="#2ba6f0" /><path d="M25 29h9v9h-9z" fill="#f5b81c" />`, 0],
        ["DuckDuckGo", `<circle cx="24" cy="24" r="22" fill="#de5833" /><circle cx="24" cy="24" r="19" fill="none" stroke="#fff" stroke-width="2" /><path d="M17 42C14 28 12 20 15 13c5-6 16-3 17 8 1 9-3 9-2 21-5 2-9 1-13 0z" fill="#fff" /><path d="M24 24c4-3 12-2 13 0-2 3-7 3-7 4 2 2 5 1 5 3-6 2-12 0-11-7z" fill="#fdc62b" /><circle cx="20" cy="19" r="2" fill="#2b4a80" /><circle cx="28" cy="18" r="2" fill="#2b4a80" /><path d="m21 35 5 3 5-3v7l-5-2-5 2z" fill="#3fa045" />`, 0],
        ["CapCut", `<rect x="3" y="3" width="42" height="42" rx="9" fill="#fff" /><path d="M38 17 24 24 10 31v2c0 3 2 4 4 4h16c3 0 4-1 4-4M38 31 10 17v-2c0-3 2-4 4-4h16c3 0 4 1 4 4" fill="none" stroke="#000" stroke-width="4" />`, 0],
        ["Claude", `<g stroke="#d27353" stroke-width="3" stroke-linecap="round"><path d="M24 24 23 3M24 24l2 20M24 24H3M24 24l20-1M24 24 10 8M24 24 36 9M24 24 12 39M24 24l13 14M24 24 5 15M24 24 6 33M24 24l18-8M24 24l18 8M24 24 16 5M24 24l6-19M24 24l-5 19M24 24l8 18" /></g>`, 1],
        ["Gemini", `<path d="M24 1c2 14 8 21 22 23-14 2-20 9-22 23C22 33 16 26 2 24 16 22 22 15 24 1z" fill="url(#gGem)" /><path d="m36 5 8 5-16 22-8-5z" fill="#7b9fc4" /><path d="m34 12 6 4-8 11-6-4z" fill="#4a6788" />`, 0],
        ["Sticky Notes", `<path d="M3 3h42v42H3z" fill="#ffd400" /><path d="M24 24h21L26 45h-2z" fill="#444" /><path d="M45 24v21H25z" fill="#e8a400" />`, 1],
        ["Excel", `<use href="#excel" />`, 2],
        ["Word", `<use href="#word" />`, 1],
        ["Chrome P", chrome(`<circle cx="42" cy="6" r="16" fill="#0f4492" /><text x="42" y="13" text-anchor="middle" font-family="Open Sans" font-size="19" fill="#bcd6f5">P</text>`), 1],
        ["Chrome 2", chrome(`<circle cx="42" cy="6" r="16" fill="#4a3426" /><path d="M28 14c4-8 10-4 14-14l10 2c4 8-2 18-10 20-6 0-12-4-14-8z" fill="#211915" /><circle cx="40" cy="3" r="7" fill="#a9825e" />`), 1],
        ["Chrome Sp", chrome(`<circle cx="42" cy="6" r="16" fill="#161616" /><text x="42" y="12" text-anchor="middle" font-family="Open Sans" font-weight="700" font-style="italic" font-size="17" fill="#eee">Sp</text>`), 1],
        ["Chrome 4", chrome(`<circle cx="42" cy="6" r="16" fill="#9a9a9a" /><path d="M32 18c1-8 19-8 20 0-4 5-16 5-20 0z" fill="#333" /><ellipse cx="42" cy="4" rx="7" ry="10" fill="#7a6252" /><path d="M35 6c0 10 14 10 14 0l-3 2h-8z" fill="#3a2c24" />`), 1],
        ["Chrome 5", chrome(`<circle cx="42" cy="6" r="16" fill="#fff" /><circle cx="42" cy="4" r="14" fill="#f7cf7a" /><path d="M33 10V2l5 3h6l5-6 1 8-4 7h-4l-2-4-3 4z" fill="#e5762b" />`), 1],
        ["Chrome 6", chrome(`<circle cx="37" cy="12" r="12" fill="#3f8a34" /><path d="M26 7c4-9 18-9 22 0z" fill="#6fb7ea" /><path d="M28 13h16v5H30z" fill="#c8402c" /><path d="m26 14 10-3 12 6" stroke="#e0c040" fill="none" stroke-width="2" />`), 1],
      ];
      const marks = ["", `<i class="absolute bottom-[10px] h-[7px] w-3 rounded-full bg-[#9a9a9a]"></i>`, `<i class="absolute bottom-[10px] h-[6px] w-8 rounded-full bg-[#4cc2ff]"></i>`];
      document.getElementById("apps").innerHTML = apps.map(([name, art, run]) => `
        <button aria-label="${name}" class="relative flex w-22 items-center justify-center">
          ${run === 2 ? `<i class="absolute h-20 w-[76px] rounded-lg border border-[#3a3a3a] bg-[#2a2a2a]"></i>` : ""}
          <svg class="relative size-12 overflow-visible" viewBox="0 0 48 48">${art}</svg>${marks[run]}
        </button>`).join("");
    </script>
  </body>
</html>
